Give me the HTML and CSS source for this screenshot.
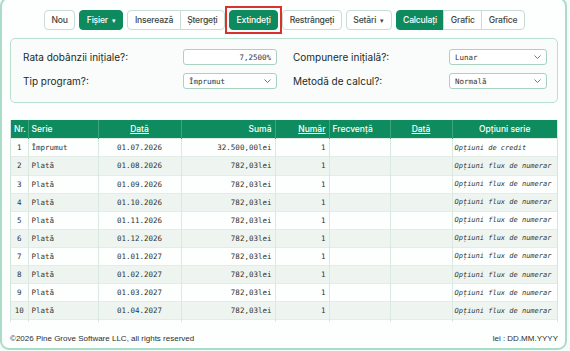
FILE: index.html
```html
<!DOCTYPE html>
<html>
  <head>
    <title>Calculator</title>
    <link rel="stylesheet" href="styles.css">
  </head>
  <body>
    <div class="card">
      <div class="toolbar">
        <button class="btn">Nou</button>
        <button class="btn green">Fișier <span class="caret">▾</span></button>
        <div class="group">
          <button class="btn">Inserează</button>
          <button class="btn">Ștergeți</button>
        </div>
        <button class="btn green marked">Extindeți</button>
        <button class="btn">Restrângeți</button>
        <button class="btn">Setări <span class="caret">▾</span></button>
        <div class="group">
          <button class="btn green">Calculați</button>
          <button class="btn">Grafic</button>
          <button class="btn">Grafice</button>
        </div>
      </div>

      <div class="panel">
        <div class="field">
          <label>Rata dobânzii inițiale?:</label>
          <div class="box num">7,2500%</div>
        </div>
        <div class="field">
          <label>Compunere inițială?:</label>
          <div class="box sel wide">Lunar<svg width="7" height="4" viewBox="0 0 7 4"><polyline points="0.5,0.5 3.5,3.5 6.5,0.5" fill="none" stroke="#666" stroke-width="0.9"/></svg></div>
        </div>
        <div class="field">
          <label>Tip program?:</label>
          <div class="box sel">Împrumut<svg width="7" height="4" viewBox="0 0 7 4"><polyline points="0.5,0.5 3.5,3.5 6.5,0.5" fill="none" stroke="#666" stroke-width="0.9"/></svg></div>
        </div>
        <div class="field">
          <label>Metodă de calcul?:</label>
          <div class="box sel wide">Normală<svg width="7" height="4" viewBox="0 0 7 4"><polyline points="0.5,0.5 3.5,3.5 6.5,0.5" fill="none" stroke="#666" stroke-width="0.9"/></svg></div>
        </div>
      </div>

      <div class="table-wrap">
        <table class="grid">
          <colgroup>
            <col style="width:17px">
            <col style="width:70px">
            <col style="width:83px">
            <col style="width:94px">
            <col style="width:54px">
            <col style="width:61px">
            <col style="width:62px">
            <col>
          </colgroup>
          <thead>
            <tr>
              <th class="l">Nr.</th>
              <th class="l">Serie</th>
              <th><u>Dată</u></th>
              <th class="r">Sumă</th>
              <th class="r"><u>Număr</u></th>
              <th class="l">Frecvență</th>
              <th><u>Dată</u></th>
              <th>Opțiuni serie</th>
            </tr>
          </thead>
          <tbody id="rows"></tbody>
        </table>
      </div>

      <div class="footer">
        <span>©2026 Pine Grove Software LLC, all rights reserved</span>
        <span>lei : DD.MM.YYYY</span>
      </div>
    </div>
    <script>
      const dates = ["01.07.2026", "01.08.2026", "01.09.2026", "01.10.2026",
        "01.11.2026", "01.12.2026", "01.01.2027", "01.02.2027", "01.03.2027",
        "01.04.2027"];
      const body = document.getElementById("rows");
      dates.forEach((d, i) => {
        const first = i === 0;
        body.innerHTML +=
          "<tr>" +
          `<td class="c">${i + 1}</td>` +
          `<td>${first ? "Împrumut" : "Plată"}</td>` +
          `<td class="c">${d}</td>` +
          `<td class="r">${first ? "32.500,00lei" : "782,03lei"}</td>` +
          `<td class="r">1</td>` +
          "<td></td><td></td>" +
          `<td class="opt">${first ? "Opțiuni de credit" : "Opțiuni flux de numerar"}</td>` +
          "</tr>";
      });
      // partial next row, scrolled under the edge
      body.innerHTML += "<tr>" + "<td></td>".repeat(8) + "</tr>";
    </script>
  </body>
</html>
```

FILE: styles.css
```css
* {
  margin: 0;
  padding: 0;
  box-sizing: border-box;
}

body {
  background-color: #f7fbf9;
  font-family: Inter, "Noto Sans", sans-serif;
  color: #2a332f;
}

.card {
  width: 567px;
  height: 353px;
  margin-top: -3px;
  border: 2px solid #aadcc8;
  border-radius: 9px;
  background-color: #fdfefe;
  padding: 11px 7px 0 8px;
  display: flex;
  flex-direction: column;
}

.toolbar {
  display: flex;
  gap: 4px;
  height: 20px;
  padding-left: 34px;
}

.btn {
  height: 20px;
  padding: 0 6.5px;
  font-family: Inter, sans-serif;
  font-size: 8.6px;
  font-weight: 500;
  letter-spacing: -0.2px;
  color: #3b4641;
  background-color: #fff;
  border: 1px solid #c8dcd3;
  border-radius: 4px;
  white-space: nowrap;
}

.btn.green {
  background-color: #0d8a5e;
  border-color: #0d8a5e;
  color: #fff;
}

.marked {
  position: relative;
}

.marked::after {
  content: "";
  position: absolute;
  top: -5px;
  left: -5px;
  right: -5px;
  bottom: -5px;
  border: 2px solid #d9322e;
}

.caret {
  font-size: 7px;
  margin-left: 2px;
}

.group {
  display: flex;
}

.group .btn {
  border-radius: 0;
  margin-left: -1px;
}

.group .btn:first-child {
  border-radius: 4px 0 0 4px;
  margin-left: 0;
}

.group .btn:last-child {
  border-radius: 0 4px 4px 0;
}

.panel {
  margin-top: 8px;
  height: 65px;
  border: 1px solid #b9e0d0;
  border-radius: 5px;
  background-color: #fafcfb;
  padding: 10px 10px 0 12px;
  display: grid;
  grid-template-columns: 254px 254px;
  column-gap: 16px;
  row-gap: 8px;
  align-content: start;
}

.field {
  display: flex;
  justify-content: space-between;
  align-items: center;
  height: 16px;
}

.field label {
  font-size: 10px;
  color: #222a27;
}

.box {
  width: 94px;
  height: 16px;
  border: 1px solid #a9d2c2;
  border-radius: 3px;
  background-color: #fff;
  font-family: "DejaVu Sans Mono", monospace;
  font-size: 7.5px;
  color: #333;
  display: flex;
  align-items: center;
  padding: 0 5px;
}

.box.wide {
  width: 98px;
}

.num {
  justify-content: flex-end;
}

.sel {
  justify-content: space-between;
}

.table-wrap {
  margin-top: 17px;
  height: 203px;
  overflow: hidden;
  border: 1px solid #d5e5de;
  border-top: none;
  border-bottom: none;
}

.grid {
  width: 100%;
  table-layout: fixed;
  border-collapse: collapse;
}

.grid th {
  height: 19px;
  background-color: #0e8b5f;
  color: #fff;
  font-size: 8.5px;
  font-weight: 500;
  padding: 0 3px;
  text-align: center;
  border-left: 1px solid #3aa47c;
}

.grid th:first-child,
.grid td:first-child {
  border-left: none;
}

.grid td {
  height: 18.1px;
  padding: 0 3px;
  font-family: "DejaVu Sans Mono", monospace;
  font-size: 7.5px;
  color: #2e3431;
  border-left: 1px solid #dce8e2;
  border-top: 1px solid #e3ede8;
  white-space: nowrap;
  overflow: hidden;
}

.grid tbody tr:nth-child(even) {
  background-color: #eef5f1;
}

.grid .l {
  text-align: left;
}

.grid .r {
  text-align: right;
}

.grid .c {
  text-align: center;
}

.grid .opt {
  font-style: italic;
  font-size: 7px;
  padding-left: 2px;
}

.footer {
  display: flex;
  justify-content: space-between;
  align-items: center;
  height: 26px;
  padding-top: 6px;
  font-family: "Liberation Sans", Arial, sans-serif;
  font-size: 8px;
  color: #2b302e;
}
```
